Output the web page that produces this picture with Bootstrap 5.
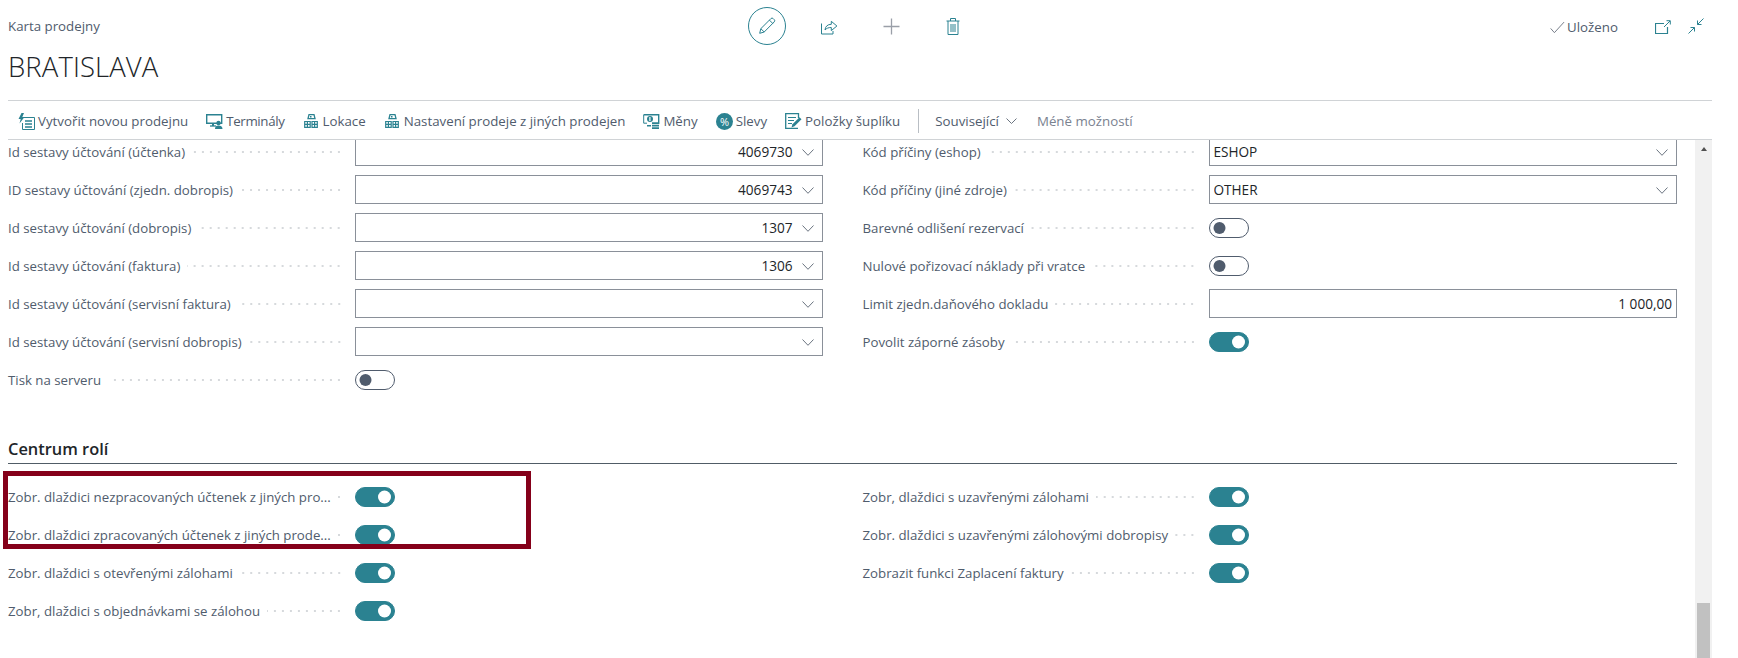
<!DOCTYPE html>
<html lang="cs">
<head>
<meta charset="utf-8">
<title>Karta prodejny</title>
<link href="https://cdn.jsdelivr.net/npm/bootstrap@5.3.0/dist/css/bootstrap.min.css" rel="stylesheet">
<style>
html,body{height:658px;overflow:hidden;background:#fff;}
body{font-family:"Open Sans","Liberation Sans",sans-serif;font-size:13.25px;color:#505c6d;}
svg{display:block;flex:none;}
.shell{width:1712px;height:658px;display:flex;flex-direction:column;}
.head-area{height:100px;padding-left:8px;padding-right:8px;}
.title-col{width:728px;}
.crumb{font-size:13.3px;line-height:18px;margin-top:17px;color:#505c6d;}
.page-name{font-size:27.5px;font-weight:300;line-height:38px;margin:13px 0 0;color:#212529;letter-spacing:.1px;}
.act-slot{width:62px;height:38px;margin-top:7px;padding:0;border:0;background:none;display:flex;align-items:center;justify-content:center;}
.act-ring{width:38px;height:38px;border:1px solid #2b8291;border-radius:50%;display:flex;align-items:center;justify-content:center;}
.saved{font-size:13.3px;line-height:18px;margin-top:18px;gap:2px;width:84px;}
.win-tool{margin-top:20px;}
.win-gap-a{margin-left:21px;}
.win-gap-b{margin-left:17px;margin-top:18px;}
.tool-bar{margin-left:8px;height:40px;border-top:1px solid #d0d3d6;border-bottom:1px solid #d0d3d6;padding:2px 0 0 10px;gap:18px;}
.tool-btn{padding:0;border:0;font-size:13.3px;line-height:18px;color:#505c6d;gap:3px;border-radius:0;}
.ico-narrow{margin:0 2px 0 1px;}
.tight-word{letter-spacing:-.35px;}
.tool-drop{gap:7px;margin-right:2px;}
.tool-sep{width:1px;height:24px;background:#b9bec4;margin:0 -2px 0 0;}
.tool-muted{color:#7a8290;}
.body-area{flex:1;min-height:0;}
.sheet{flex:1;min-width:0;overflow:hidden;padding:0 18px 0 8px;}
.sheet-inner{margin-top:-3px;}
.form-pair{--bs-gutter-x:40px;}
.fld{height:29px;margin-bottom:9px;}
.fld-label{width:347px;flex:none;padding-right:12px;gap:7px;}
.form-pair>.col-6+.col-6 .fld-label{width:346px;}
.fld-text{white-space:nowrap;line-height:28px;padding-top:1px;color:#505c6d;}
.leader{flex:1;min-width:0;height:4px;background-image:radial-gradient(circle at center,#d6d9dc 1px,transparent 1.2px);background-size:8px 4px;background-position:right center;background-repeat:repeat-x;}
.form-select.fld-input,.form-control.fld-input{height:29px;min-height:0;border-radius:0;border:1px solid #8a9099;font-size:13.6px;line-height:19px;color:#212529;padding:0 4px;box-shadow:none;}
.form-select.fld-input{padding-right:29px;background-size:12px 7px;background-position:right 8px top 11px;background-image:url("data:image/svg+xml,%3csvg xmlns='http://www.w3.org/2000/svg' viewBox='0 0 12 7'%3e%3cpath fill='none' stroke='%236b7480' d='M.5.5 6 6.3 11.5.5'/%3e%3c/svg%3e");}
.fld-right{text-align:right;text-align-last:right;}
.form-switch .form-check-input.tgl{width:40px;height:20px;margin:0;float:none;border-radius:10px;border:1px solid #505c6d;background-color:#fff;background-size:40px 20px;background-position:0 0;box-shadow:none;opacity:1;background-image:url("data:image/svg+xml,%3csvg xmlns='http://www.w3.org/2000/svg' viewBox='0 0 40 20'%3e%3ccircle cx='9.5' cy='9' r='6' fill='%23505c6d'/%3e%3c/svg%3e");}
.form-switch .form-check-input.tgl:checked{background-color:#2b8291;border-color:#2b8291;background-image:url("data:image/svg+xml,%3csvg xmlns='http://www.w3.org/2000/svg' viewBox='0 0 40 20'%3e%3ccircle cx='28.5' cy='9' r='6.5' fill='%23fff'/%3e%3c/svg%3e");}
.form-switch.tgl-wrap{padding:0;margin:0;min-height:0;height:20px;display:flex;}
.sec-gap{margin-top:32px;}
.sec-head{font-size:16.4px;font-weight:600;line-height:28px;color:#212529;margin:0;border-bottom:1px solid #505c66;height:29px;}
.sec-body{margin-top:18px;}
.mark-box{position:absolute;left:-5px;top:-11px;width:528px;height:78px;border:5px solid #85001a;pointer-events:none;}
.scroll-track{width:17px;background:#f1f1f1;margin-top:0;}
.scroll-up{width:0;height:0;border-left:3px solid transparent;border-right:3px solid transparent;border-bottom:4px solid #505050;margin:7px auto 0;}
.scroll-thumb{width:13px;height:55px;background:#c1c1c1;margin:auto auto 0;}
</style>
</head>
<body>
<div class="shell">
  <header class="head-area d-flex">
    <div class="title-col">
      <div class="crumb">Karta prodejny</div>
      <h1 class="page-name">BRATISLAVA</h1>
    </div>
    <div class="d-flex align-items-start">
      <button class="act-slot" aria-label="Upravit"><span class="act-ring">
        <svg width="18" height="18" viewBox="0 0 18 18" fill="none" stroke="#2b8291"><path d="M1.7 16.3 2.8 11.7 12.9 1.6a1.6 1.6 0 0 1 2.3 0l1 1a1.6 1.6 0 0 1 0 2.3L6.2 15Z"/><path d="M2.8 11.7 6.2 15M11.4 3.1l3.4 3.4"/></svg>
      </span></button>
      <button class="act-slot" aria-label="Sdílet">
        <svg width="17" height="17" viewBox="0 0 17 17" fill="none" stroke="#2b8291"><path d="M.5 5.5v10.500h11.500v-3"/><path d="M4 12c.3-3.6 2.6-5.700 6.300-5.700V3.300l5.600 4.700-5.600 4.600V9.500C7.500 9.500 5.500 10.200 4 12Z"/></svg>
      </button>
      <button class="act-slot" aria-label="Nový">
        <svg width="17" height="17" viewBox="0 0 17 17" fill="none" stroke="#9a9fa8" stroke-width="1.3"><path d="M8.500.5v16M.5 8.500h16"/></svg>
      </button>
      <button class="act-slot" aria-label="Odstranit">
        <svg width="14" height="17" viewBox="0 0 14 17" fill="none" stroke="#2b8291"><path d="M.5 3h13M4.500 3V.5h5V3M2 3v13.500h10V3M5 6v8M7 6v8M9 6v8"/></svg>
      </button>
    </div>
    <div class="ms-auto d-flex align-items-start">
      <div class="saved d-flex align-items-center text-nowrap">
        <svg width="15" height="13" viewBox="0 0 16 13" fill="none" stroke="#6f7683"><path d="M.7 7.500 4.700 12 15 .7"/></svg><span>Uloženo</span>
      </div>
      <div class="win-tool win-gap-a"><svg width="16" height="14" viewBox="0 0 16 14" fill="none" stroke="#2b8291"><path d="M9 3.500H.5v10h12V7" stroke-width="1.200"/><path d="M9 7 15 1M11.500.7h3.800v3.800"/></svg></div>
      <div class="win-tool win-gap-b"><svg width="16" height="16" viewBox="0 0 16 16" fill="none" stroke="#2b8291"><path d="M15.500.5 9.500 6.500M9.500 2.500v4h4M.5 15.500l6-6M6.500 13.500v-4h-4"/></svg></div>
    </div>
  </header>

  <nav class="tool-bar d-flex align-items-center">
    <button class="btn tool-btn d-flex align-items-center">
      <svg width="17" height="17" viewBox="0 0 17 17"><path fill="#2b8291" d="M3.500 0 .5 6h2.200L1.500 10.500 6.500 4H4.300L6 0Z"/><path fill="none" stroke="#2b8291" d="M5 4.500h11.500v12H4.500V10"/><path fill="none" stroke="#2b8291" stroke-width="1.300" d="M7 8h7M7 11h7M7 14h7"/></svg>
      <span>Vytvořit novou prodejnu</span>
    </button>
    <button class="btn tool-btn d-flex align-items-center">
      <svg width="17" height="15" viewBox="0 0 17 15"><path fill="none" stroke="#2b8291" stroke-width="1.400" d="M.7.7h15v8.500H.7z"/><path fill="none" stroke="#2b8291" stroke-width="1.300" d="M4 12h6"/><path fill="#2b8291" d="M6 9h2v3H6z"/><circle cx="12.500" cy="9" r="2.200" fill="#2b8291"/><path fill="#2b8291" d="M9 15c0-2.500 1.300-3.500 3.500-3.500S16.500 12.500 16.500 15Z"/></svg>
      <span class="tight-word">Terminály</span>
    </button>
    <button class="btn tool-btn d-flex align-items-center">
      <svg class="ico-narrow" width="14" height="14" viewBox="0 0 14 14"><path fill="none" stroke="#2b8291" stroke-width="1.300" d="M5 .7h5l1 4H4z"/><path fill="#2b8291" d="M6 2h1.500v1.500H6z"/><path fill="none" stroke="#2b8291" stroke-width="1.200" d="M.7 13.300V7.500h5.500v5.800zM8 7.500h5.300v5.800H8zM.7 10.400h5.500M3.400 7.500v5.800M8 10.400h5.300M10.600 7.500v5.800"/></svg>
      <span>Lokace</span>
    </button>
    <button class="btn tool-btn d-flex align-items-center">
      <svg class="ico-narrow" width="14" height="14" viewBox="0 0 14 14"><path fill="none" stroke="#2b8291" stroke-width="1.300" d="M5 .7h5l1 4H4z"/><path fill="#2b8291" d="M6 2h1.500v1.500H6z"/><path fill="none" stroke="#2b8291" stroke-width="1.200" d="M.7 13.300V7.500h5.500v5.800zM8 7.500h5.300v5.800H8zM.7 10.400h5.500M3.400 7.500v5.800M8 10.400h5.300M10.600 7.500v5.800"/></svg>
      <span>Nastavení prodeje z jiných prodejen</span>
    </button>
    <button class="btn tool-btn d-flex align-items-center">
      <svg width="17" height="15" viewBox="0 0 17 15"><path fill="none" stroke="#2b8291" stroke-width="1.400" d="M.7.7h15v8.500H9"/><path fill="none" stroke="#2b8291" d="M.7.7v8.500H4"/><circle cx="7" cy="5" r="3" fill="#2b8291"/><path fill="#fff" d="M6.300 3h1.200v4H6.300z"/><path fill="#2b8291" d="M9 8.500h7v1.800H9zM9 11h7v1.600H9zM9 13.300h7V15H9zM4 11h4v1.500H4z"/></svg>
      <span>Měny</span>
    </button>
    <button class="btn tool-btn d-flex align-items-center">
      <svg width="17" height="17" viewBox="0 0 17 17"><circle cx="8.500" cy="8.500" r="8.500" fill="#2b8291"/><text x="8.500" y="12.500" text-anchor="middle" font-family="Open Sans,sans-serif" font-size="11" fill="#fff">%</text></svg>
      <span>Slevy</span>
    </button>
    <button class="btn tool-btn d-flex align-items-center">
      <svg width="17" height="16" viewBox="0 0 17 16"><path fill="none" stroke="#2b8291" stroke-width="1.300" d="M13.500 5V.7H.7v14.600H13"/><path fill="none" stroke="#2b8291" d="M3 4.500h8M3 7.500h6M3 10.500h4"/><path fill="#2b8291" d="m6.500 14.500 1-3.200 7-7 2 2-7 7Z"/></svg>
      <span>Položky šuplíku</span>
    </button>
    <span class="tool-sep"></span>
    <button class="btn tool-btn tool-drop d-flex align-items-center">
      <span>Související</span>
      <svg width="11" height="6" viewBox="0 0 11 6" fill="none" stroke="#6b7480"><path d="M.5.500 5.500 5.500 10.500.500"/></svg>
    </button>
    <button class="btn tool-btn tool-muted">Méně možností</button>
  </nav>

  <div class="body-area d-flex">
    <main class="sheet">
      <div class="sheet-inner">
        <div class="row form-pair">
          <div class="col-6">
            <div class="fld d-flex align-items-center"><label class="fld-label d-flex align-items-center"><span class="fld-text">Id sestavy účtování (účtenka)</span><span class="leader"></span></label><select class="form-select fld-input fld-right flex-fill"><option>4069730</option></select></div>
            <div class="fld d-flex align-items-center"><label class="fld-label d-flex align-items-center"><span class="fld-text">ID sestavy účtování (zjedn. dobropis)</span><span class="leader"></span></label><select class="form-select fld-input fld-right flex-fill"><option>4069743</option></select></div>
            <div class="fld d-flex align-items-center"><label class="fld-label d-flex align-items-center"><span class="fld-text">Id sestavy účtování (dobropis)</span><span class="leader"></span></label><select class="form-select fld-input fld-right flex-fill"><option>1307</option></select></div>
            <div class="fld d-flex align-items-center"><label class="fld-label d-flex align-items-center"><span class="fld-text">Id sestavy účtování (faktura)</span><span class="leader"></span></label><select class="form-select fld-input fld-right flex-fill"><option>1306</option></select></div>
            <div class="fld d-flex align-items-center"><label class="fld-label d-flex align-items-center"><span class="fld-text">Id sestavy účtování (servisní faktura)</span><span class="leader"></span></label><select class="form-select fld-input fld-right flex-fill"><option></option></select></div>
            <div class="fld d-flex align-items-center"><label class="fld-label d-flex align-items-center"><span class="fld-text">Id sestavy účtování (servisní dobropis)</span><span class="leader"></span></label><select class="form-select fld-input fld-right flex-fill"><option></option></select></div>
            <div class="fld d-flex align-items-center"><label class="fld-label d-flex align-items-center"><span class="fld-text">Tisk na serveru</span><span class="leader"></span></label><div class="form-check form-switch tgl-wrap"><input class="form-check-input tgl" type="checkbox" role="switch"></div></div>
          </div>
          <div class="col-6">
            <div class="fld d-flex align-items-center"><label class="fld-label d-flex align-items-center"><span class="fld-text">Kód příčiny (eshop)</span><span class="leader"></span></label><select class="form-select fld-input flex-fill"><option>ESHOP</option></select></div>
            <div class="fld d-flex align-items-center"><label class="fld-label d-flex align-items-center"><span class="fld-text">Kód příčiny (jiné zdroje)</span><span class="leader"></span></label><select class="form-select fld-input flex-fill"><option>OTHER</option></select></div>
            <div class="fld d-flex align-items-center"><label class="fld-label d-flex align-items-center"><span class="fld-text">Barevné odlišení rezervací</span><span class="leader"></span></label><div class="form-check form-switch tgl-wrap"><input class="form-check-input tgl" type="checkbox" role="switch"></div></div>
            <div class="fld d-flex align-items-center"><label class="fld-label d-flex align-items-center"><span class="fld-text">Nulové pořizovací náklady při vratce</span><span class="leader"></span></label><div class="form-check form-switch tgl-wrap"><input class="form-check-input tgl" type="checkbox" role="switch"></div></div>
            <div class="fld d-flex align-items-center"><label class="fld-label d-flex align-items-center"><span class="fld-text">Limit zjedn.daňového dokladu</span><span class="leader"></span></label><input class="form-control fld-input fld-right flex-fill" value="1 000,00"></div>
            <div class="fld d-flex align-items-center"><label class="fld-label d-flex align-items-center"><span class="fld-text">Povolit záporné zásoby</span><span class="leader"></span></label><div class="form-check form-switch tgl-wrap"><input class="form-check-input tgl" type="checkbox" role="switch" checked></div></div>
          </div>
        </div>
        <section class="sec-gap">
          <h2 class="sec-head">Centrum rolí</h2>
          <div class="sec-body position-relative">
            <div class="mark-box"></div>
            <div class="row form-pair">
              <div class="col-6">
                <div class="fld d-flex align-items-center"><label class="fld-label d-flex align-items-center"><span class="fld-text">Zobr. dlaždici nezpracovaných účtenek z jiných pro...</span><span class="leader"></span></label><div class="form-check form-switch tgl-wrap"><input class="form-check-input tgl" type="checkbox" role="switch" checked></div></div>
                <div class="fld d-flex align-items-center"><label class="fld-label d-flex align-items-center"><span class="fld-text">Zobr. dlaždici zpracovaných účtenek z jiných prode...</span><span class="leader"></span></label><div class="form-check form-switch tgl-wrap"><input class="form-check-input tgl" type="checkbox" role="switch" checked></div></div>
                <div class="fld d-flex align-items-center"><label class="fld-label d-flex align-items-center"><span class="fld-text">Zobr. dlaždici s otevřenými zálohami</span><span class="leader"></span></label><div class="form-check form-switch tgl-wrap"><input class="form-check-input tgl" type="checkbox" role="switch" checked></div></div>
                <div class="fld d-flex align-items-center"><label class="fld-label d-flex align-items-center"><span class="fld-text">Zobr, dlaždici s objednávkami se zálohou</span><span class="leader"></span></label><div class="form-check form-switch tgl-wrap"><input class="form-check-input tgl" type="checkbox" role="switch" checked></div></div>
              </div>
              <div class="col-6">
                <div class="fld d-flex align-items-center"><label class="fld-label d-flex align-items-center"><span class="fld-text">Zobr, dlaždici s uzavřenými zálohami</span><span class="leader"></span></label><div class="form-check form-switch tgl-wrap"><input class="form-check-input tgl" type="checkbox" role="switch" checked></div></div>
                <div class="fld d-flex align-items-center"><label class="fld-label d-flex align-items-center"><span class="fld-text">Zobr. dlaždici s uzavřenými zálohovými dobropisy</span><span class="leader"></span></label><div class="form-check form-switch tgl-wrap"><input class="form-check-input tgl" type="checkbox" role="switch" checked></div></div>
                <div class="fld d-flex align-items-center"><label class="fld-label d-flex align-items-center"><span class="fld-text">Zobrazit funkci Zaplacení faktury</span><span class="leader"></span></label><div class="form-check form-switch tgl-wrap"><input class="form-check-input tgl" type="checkbox" role="switch" checked></div></div>
              </div>
            </div>
          </div>
        </section>
      </div>
    </main>
    <aside class="scroll-track d-flex flex-column">
      <div class="scroll-up"></div>
      <div class="scroll-thumb"></div>
    </aside>
  </div>
</div>
</body>
</html>
